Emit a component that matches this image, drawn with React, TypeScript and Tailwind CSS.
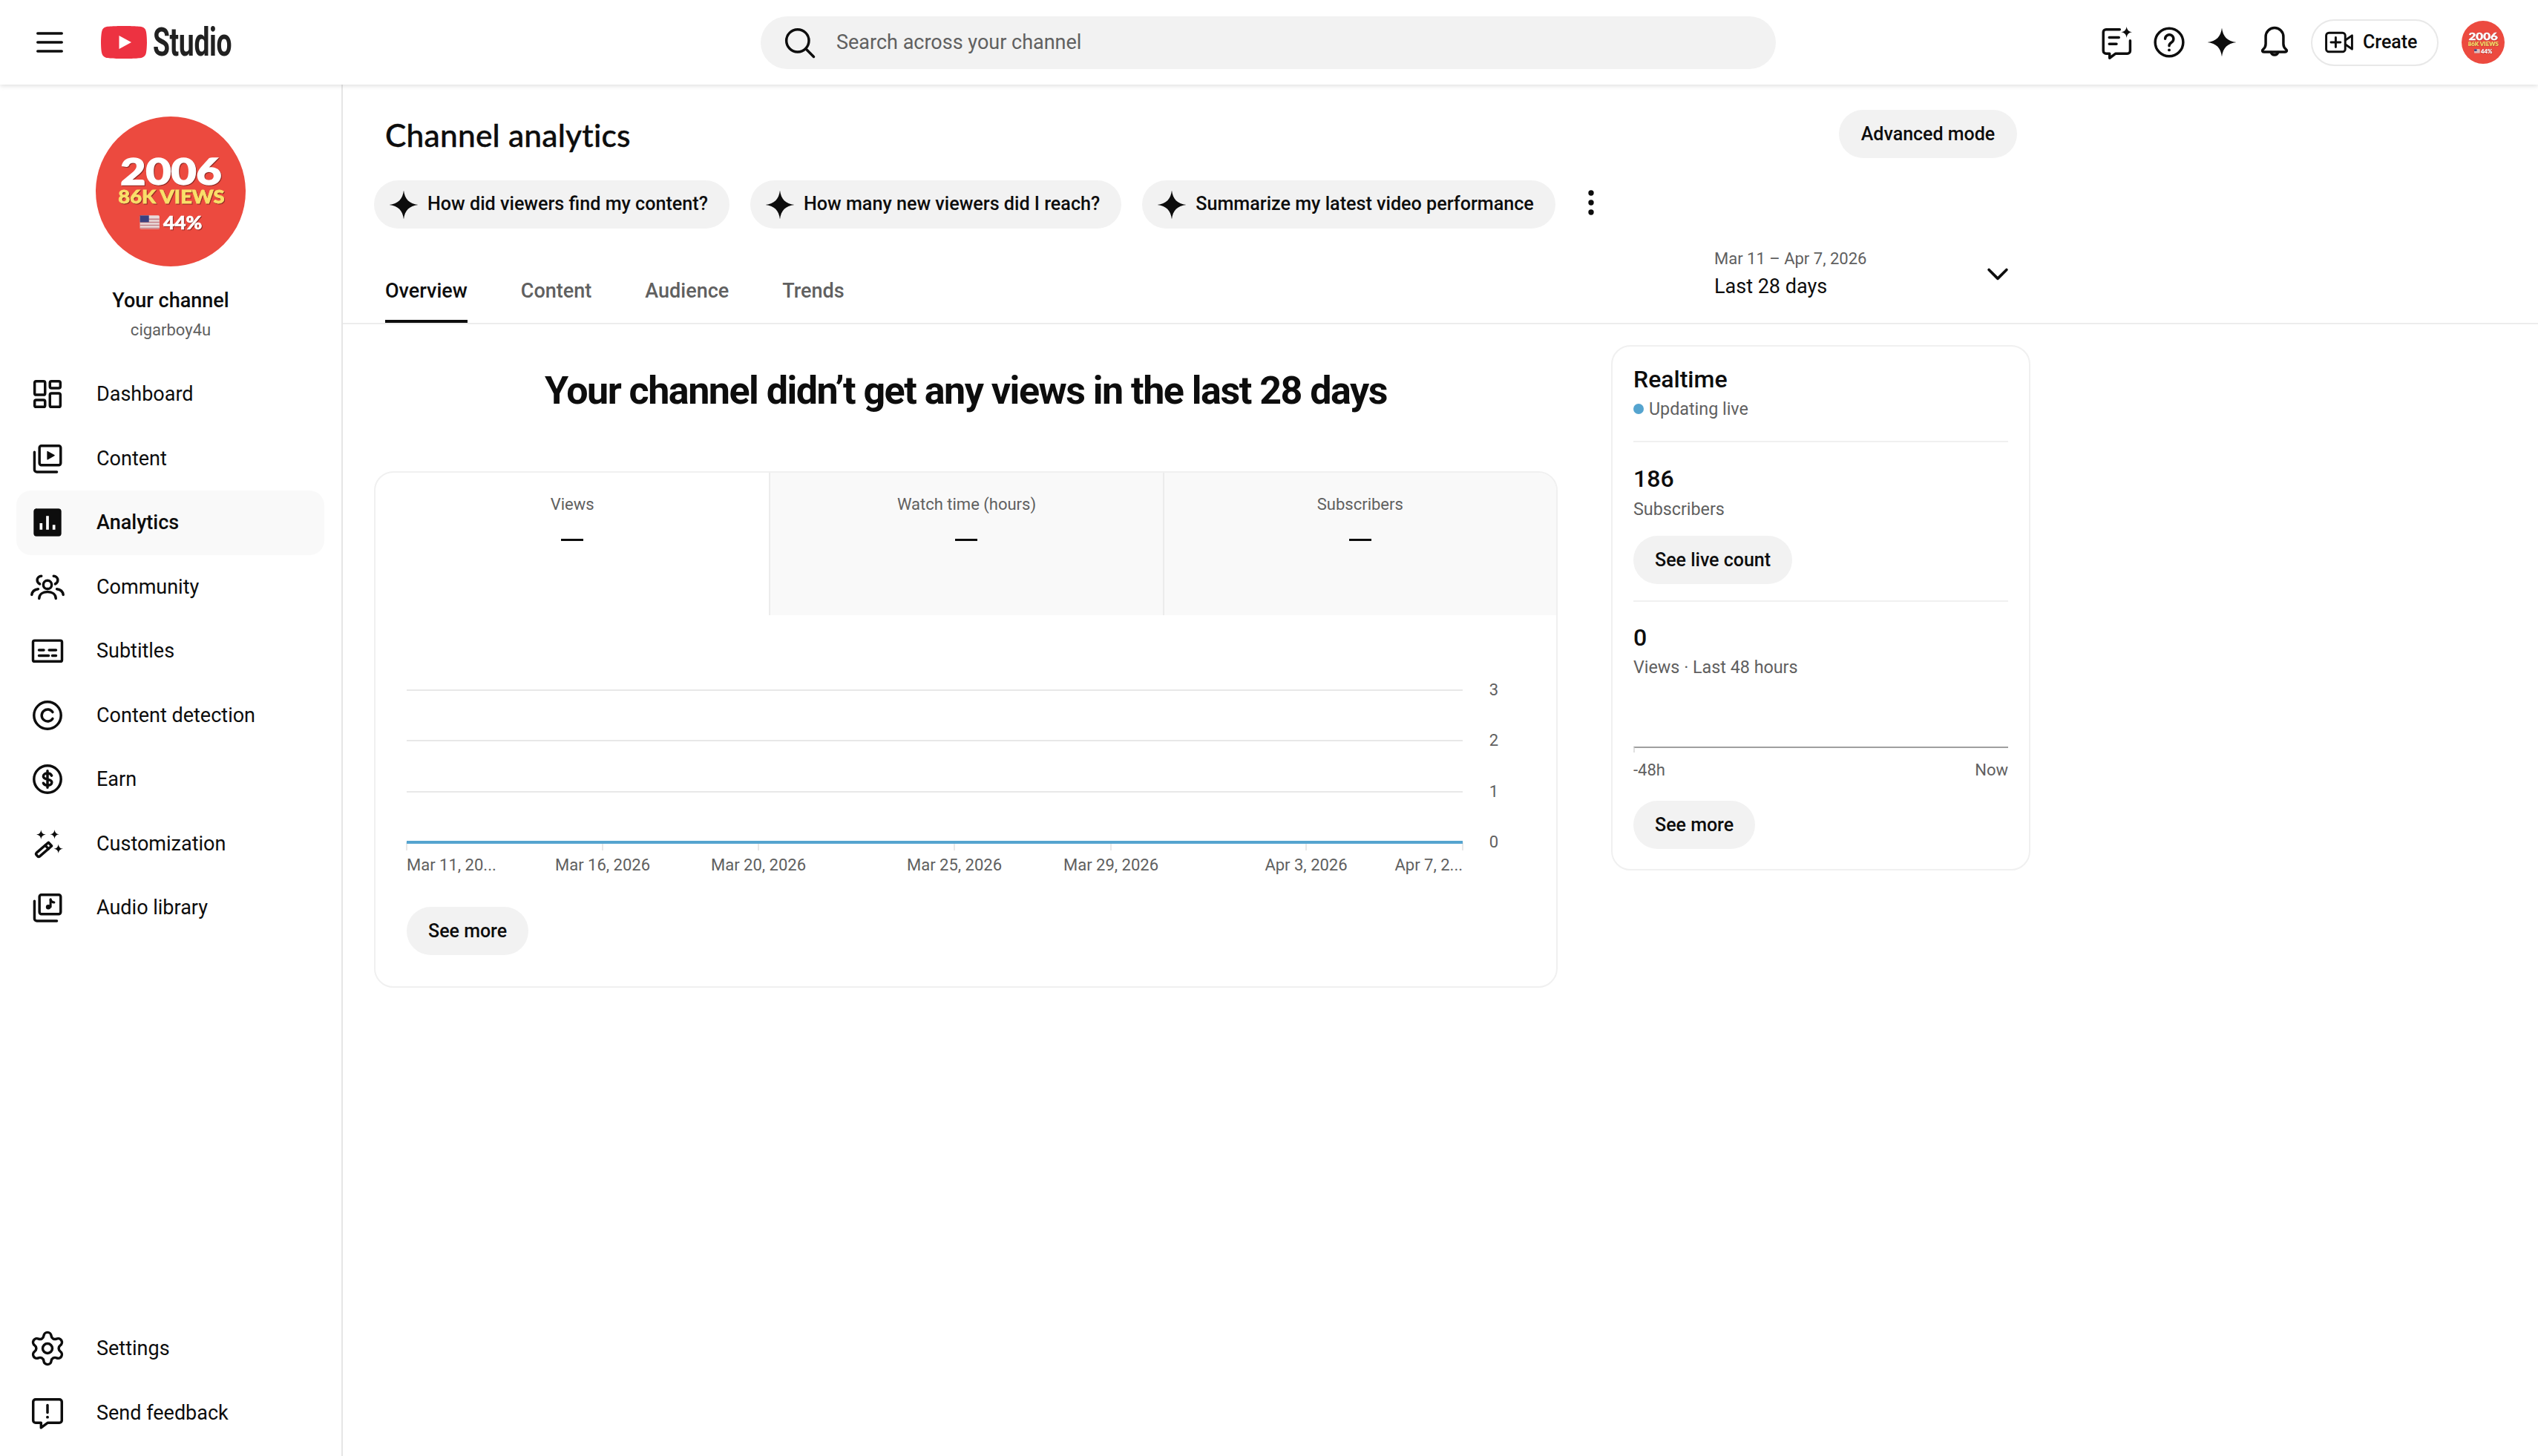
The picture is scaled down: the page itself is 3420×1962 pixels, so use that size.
import React from 'react';
import { Settings } from 'lucide-react';

type IconProps = { className?: string };

const Ico = ({ children, className = 'w-[52px] h-[52px]' }: { children: React.ReactNode; className?: string }) => (
  <svg
    viewBox="0 0 24 24"
    fill="none"
    stroke="#0d0d0d"
    strokeWidth={1.6}
    strokeLinecap="round"
    strokeLinejoin="round"
    className={`shrink-0 ${className}`}
  >
    {children}
  </svg>
);

const DashboardIcon = () => (
  <Ico>
    <rect x="4" y="4" width="6.5" height="8.5" rx="1" />
    <rect x="4" y="15.7" width="6.5" height="4.3" rx="1" />
    <rect x="13.5" y="4" width="6.5" height="4.3" rx="1" />
    <rect x="13.5" y="11.5" width="6.5" height="8.5" rx="1" />
  </Ico>
);

const ContentIcon = () => (
  <Ico>
    <rect x="7" y="4" width="13.2" height="12" rx="1.2" />
    <path d="M12 7.6 16.2 10 12 12.4Z" fill="#0d0d0d" strokeWidth={0.6} />
    <path d="M3.9 8v10.8a1.5 1.5 0 0 0 1.5 1.5h12.4" />
  </Ico>
);

const AnalyticsIcon = () => (
  <Ico>
    <rect x="3.6" y="3.6" width="16.8" height="16.8" rx="1.3" fill="#0d0d0d" strokeWidth={0.4} />
    <path d="M8 12.5V16.5M12 8V16.5M16 13.5V16.5" stroke="#fff" strokeWidth={1.7} strokeLinecap="butt" />
  </Ico>
);

const CommunityIcon = () => (
  <Ico>
    <circle cx="12" cy="10.6" r="2.6" />
    <path d="M6.8 19.2c0-2.8 2.4-4.2 5.2-4.2s5.2 1.4 5.2 4.2" />
    <path d="M8.2 5.2a2.6 2.6 0 0 0-2.6 2.4c0 1.2.8 2.1 1.6 2.5" />
    <path d="M15.8 5.2a2.6 2.6 0 0 1 2.6 2.4c0 1.2-.8 2.1-1.6 2.5" />
    <path d="M2.2 16.8c.3-2 1.8-3.2 4-3.5M21.8 16.8c-.3-2-1.8-3.2-4-3.5" />
  </Ico>
);

const SubtitlesIcon = () => (
  <Ico>
    <rect x="3" y="5.6" width="18" height="13" rx="1" />
    <path d="M6.7 11.5h3M13 11.5h4.3M6.7 15h6M15 15h2.3" />
  </Ico>
);

const CopyrightIcon = () => (
  <Ico>
    <circle cx="12" cy="12" r="8.4" />
    <path d="M15.2 10a3.7 3.7 0 1 0 0 4" />
  </Ico>
);

const EarnIcon = () => (
  <Ico>
    <circle cx="12" cy="12" r="8.4" />
    <path d="M14.6 9.8c-.4-1-1.4-1.5-2.6-1.5-1.5 0-2.6.8-2.6 1.9 0 2.7 5.3 1.2 5.3 3.8 0 1.1-1.2 1.9-2.7 1.9-1.2 0-2.2-.5-2.6-1.5M12 6.8v10.4" />
  </Ico>
);

const WandIcon = () => (
  <Ico>
    <path d="M5.2 17.6 12.6 11.2l2 2.2-7.4 6.4a1 1 0 0 1-1.4-.1l-.7-.8a1 1 0 0 1 .1-1.3Z" />
    <path d="m10.600 13 2 2.200" />
    <path
      d="M8 3.4c.2 1.8 1.100 2.700 2.900 2.900C9.100 6.500 8.200 7.400 8 9.200 7.800 7.400 6.900 6.500 5.100 6.300 6.900 6.100 7.800 5.200 8 3.400ZM16.400 3.200c.2 1.800 1.100 2.700 2.900 2.900-1.800.2-2.700 1.100-2.900 2.900-.2-1.800-1.100-2.700-2.900-2.900 1.800-.2 2.700-1.100 2.900-2.900ZM18.800 12.200c.2 1.800 1.100 2.700 2.900 2.900-1.800.2-2.700 1.100-2.900 2.900-.2-1.800-1.100-2.700-2.900-2.900 1.800-.2 2.700-1.100 2.900-2.900Z"
      fill="#0d0d0d"
      stroke="none"
    />
  </Ico>
);

const AudioIcon = () => (
  <Ico>
    <rect x="7" y="4" width="13.2" height="12" rx="1.2" />
    <path d="M13.9 6.8v4.7" strokeWidth={1.4} />
    <path d="M13.9 7.2c.4 1 1.2 1.5 2.2 1.6" strokeWidth={1.4} />
    <circle cx="12.5" cy="11.6" r="1.5" fill="#0d0d0d" stroke="none" />
    <path d="M3.9 8v10.8a1.5 1.5 0 0 0 1.5 1.5h12.4" />
  </Ico>
);

const FeedbackIcon = () => (
  <Ico>
    <path d="M4.6 3.6h14.8A1.5 1.5 0 0 1 20.9 5.100v11.500a1.500 1.500 0 0 1-1.500 1.500h-7.200L8 21.200v-3.100H4.600a1.500 1.500 0 0 1-1.500-1.500V5.100a1.500 1.500 0 0 1 1.500-1.500Z" />
    <path d="M12 7.200v4.600" />
    <circle cx="12" cy="14.600" r="0.9" fill="#0d0d0d" stroke="none" />
  </Ico>
);

const Spark = ({ className = 'w-[52px] h-[52px]' }: IconProps) => (
  <svg viewBox="0 0 24 24" className={`shrink-0 ${className}`} fill="#0d0d0d">
    <path d="M12 3c.7 5.600 3.400 8.300 9 9-5.600.7-8.300 3.400-9 9-.7-5.600-3.400-8.300-9-9 5.600-.7 8.300-3.400 9-9Z" />
  </svg>
);

const Avatar = ({ className }: IconProps) => (
  <svg viewBox="0 0 200 200" className={`shrink-0 ${className}`}>
    <circle cx="100" cy="100" r="100" fill="#ec4a3f" />
    <g
      fontFamily="Lato, Roboto, sans-serif"
      fontWeight={900}
      className="[filter:drop-shadow(1px_1.5px_0_#8f2a25)]"
    >
      <text x="33" y="91" fontSize="48" fill="#fff" stroke="#fff" strokeWidth="1.5" textLength="135" lengthAdjust="spacingAndGlyphs">2006</text>
      <text x="30" y="116" fontSize="25" fill="#f9df6a" stroke="#f9df6a" strokeWidth="0.8" textLength="142" lengthAdjust="spacingAndGlyphs">86K VIEWS</text>
      <text x="90" y="150" fontSize="25" fill="#fff" stroke="#fff" strokeWidth="0.6" textLength="52" lengthAdjust="spacingAndGlyphs">44%</text>
    </g>
    <rect x="59" y="132" width="26" height="18" rx="1.500" fill="#e9dada" />
    <path d="M59 137h26M59 141h26M59 145h26M59 149h26" stroke="#c47f85" strokeWidth="1.500" />
    <rect x="59" y="132" width="12" height="9" fill="#39407f" />
  </svg>
);

const mainNav = [
  { label: 'Dashboard', icon: <DashboardIcon /> },
  { label: 'Content', icon: <ContentIcon /> },
  { label: 'Analytics', icon: <AnalyticsIcon />, active: true },
  { label: 'Community', icon: <CommunityIcon /> },
  { label: 'Subtitles', icon: <SubtitlesIcon /> },
  { label: 'Content detection', icon: <CopyrightIcon /> },
  { label: 'Earn', icon: <EarnIcon /> },
  { label: 'Customization', icon: <WandIcon /> },
  { label: 'Audio library', icon: <AudioIcon /> },
];

const NavRow = ({ label, icon, active }: { label: string; icon: React.ReactNode; active?: boolean }) => (
  <a
    className={`flex h-[86.5px] items-center gap-[40px] rounded-[20px] pl-[16px] text-[27px] text-[#0d0d0d] ${
      active ? 'bg-[#f9f9f9] font-medium' : ''
    }`}
  >
    {icon}
    <span>{label}</span>
  </a>
);

const Pill = ({ children, className = '' }: { children: React.ReactNode; className?: string }) => (
  <button className={`flex h-[65px] items-center whitespace-nowrap rounded-full bg-[#f2f2f2] px-[29px] text-[25px] font-medium text-[#0d0d0d] ${className}`}>
    {children}
  </button>
);

const Header = () => (
  <header className="relative z-10 flex h-[114px] shrink-0 items-center bg-white shadow-[0_2px_6px_rgba(0,0,0,0.12)]">
    <div className="flex w-[1025px] shrink-0 items-center pl-[41px]">
      <svg viewBox="0 0 24 24" className="h-[52px] w-[52px]" stroke="#0d0d0d" strokeWidth={1.6} strokeLinecap="round">
        <path d="M4.500 6.500h15M4.500 12h15M4.500 17.500h15" />
      </svg>
      <svg viewBox="0 0 62 44" className="ml-[43px] h-[44px] w-[62px]">
        <path d="M60.700 6.900A7.800 7.800 0 0 0 55.200 1.300C50.400 0 31 0 31 0S11.600 0 6.800 1.300A7.800 7.800 0 0 0 1.300 6.900C0 11.700 0 22 0 22s0 10.300 1.300 15.100a7.800 7.800 0 0 0 5.500 5.600C11.600 44 31 44 31 44s19.400 0 24.200-1.300a7.800 7.800 0 0 0 5.500-5.600C62 32.300 62 22 62 22s0-10.300-1.300-15.100Z" fill="#ed3241" />
        <path d="M24.500 13 41 22l-16.500 9Z" fill="#fff" />
      </svg>
      <span className="ml-[8px] inline-block origin-left scale-x-[0.69] font-['Roboto',sans-serif] text-[54px] font-bold leading-none tracking-[-0.5px] text-[#212121]">
        Studio
      </span>
    </div>
    <div className="flex h-[71px] w-[1368px] shrink-0 items-center rounded-full bg-[#f2f2f2] pl-[26px]">
      <svg viewBox="0 0 24 24" className="h-[52px] w-[52px]" fill="none" stroke="#0d0d0d" strokeWidth={1.6} strokeLinecap="round">
        <circle cx="11" cy="11" r="7" />
        <path d="m16.200 16.200 4.800 4.800" />
      </svg>
      <span className="ml-[24px] text-[27px] text-[#606060]">Search across your channel</span>
    </div>
    <div className="flex flex-1 items-center justify-end pr-[45px]">
      <div className="flex w-[71px] justify-center">
        <Ico>
          <path d="M14 4H5.500A1.700 1.700 0 0 0 3.800 5.700v11.600a1.700 1.700 0 0 0 1.700 1.700h2.200v2.800l3.800-2.800h7.300a1.700 1.700 0 0 0 1.700-1.700V11" />
          <path d="M7.500 9h6M7.500 13h4.500" />
          <path d="M18.300 2.200c.3 2.200 1.300 3.200 3.500 3.500-2.200.3-3.200 1.300-3.500 3.500-.3-2.200-1.300-3.200-3.500-3.500 2.200-.3 3.200-1.300 3.500-3.500Z" fill="#0d0d0d" stroke="none" />
        </Ico>
      </div>
      <div className="flex w-[71px] justify-center">
        <Ico>
          <circle cx="12" cy="12" r="8.700" />
          <path d="M9.500 9.800a2.600 2.600 0 1 1 3.900 2.300c-.9.600-1.400 1-1.400 2.100" />
          <circle cx="12" cy="16.800" r="0.900" fill="#0d0d0d" stroke="none" />
        </Ico>
      </div>
      <div className="flex w-[71px] justify-center">
        <Spark />
      </div>
      <div className="flex w-[71px] justify-center">
        <Ico>
          <path d="M12 3a5.500 5.500 0 0 0-5.500 5.500V13c0 1.400-.6 2.500-1.700 3.500-.7.700-.3 1.500.6 1.500h13.200c.9 0 1.300-.8.600-1.500-1.100-1-1.700-2.100-1.700-3.500V8.500A5.500 5.500 0 0 0 12 3Z" />
          <path d="M9.800 18.200a2.300 2.300 0 0 0 4.400 0" />
        </Ico>
      </div>
      <button className="ml-[14px] flex h-[63px] w-[172px] items-center rounded-full border-2 border-[#e8e8e8] pl-[14px] text-[25px] font-medium text-[#0d0d0d]">
        <Ico className="h-[44px] w-[44px]">
          <rect x="2.500" y="5" width="14" height="14" rx="2" />
          <path d="M9.500 8.500v7M6 12h7" />
          <path d="m16.500 10.500 5-3.500v10l-5-3.500" />
        </Ico>
        <span className="ml-[10px]">Create</span>
      </button>
      <Avatar className="ml-[31px] h-[58px] w-[58px]" />
    </div>
  </header>
);

const Sidebar = () => (
  <aside className="flex w-[462px] shrink-0 flex-col justify-between border-r-2 border-[#e5e5e5] pb-[15px]">
    <div>
      <div className="flex flex-col items-center pt-[43px]">
        <Avatar className="h-[202px] w-[202px]" />
        <div className="mt-[28px] text-[27px] font-medium leading-[36px] text-[#0d0d0d]">Your channel</div>
        <div className="mt-[6px] text-[22px] leading-[32px] text-[#606060]">cigarboy4u</div>
      </div>
      <nav className="mt-[27px] flex flex-col pl-[22px] pr-[23px]">
        {mainNav.map((item) => (
          <NavRow key={item.label} {...item} />
        ))}
      </nav>
    </div>
    <div className="flex flex-col pl-[22px] pr-[23px]">
      <NavRow label="Settings" icon={<Ico><Settings x={0} y={0} width={24} height={24} strokeWidth={1.6} /></Ico>} />
      <NavRow label="Send feedback" icon={<FeedbackIcon />} />
    </div>
  </aside>
);

const chips = ['How did viewers find my content?', 'How many new viewers did I reach?', 'Summarize my latest video performance'];
const tabs = ['Overview', 'Content', 'Audience', 'Trends'];
const metrics = ['Views', 'Watch time (hours)', 'Subscribers'];

const xLabels: { text: string; x: number; anchor: 'start' | 'middle' | 'end' }[] = [
  { text: 'Mar 11, 20...', x: 42, anchor: 'start' },
  { text: 'Mar 16, 2026', x: 306, anchor: 'middle' },
  { text: 'Mar 20, 2026', x: 516, anchor: 'middle' },
  { text: 'Mar 25, 2026', x: 780, anchor: 'middle' },
  { text: 'Mar 29, 2026', x: 991, anchor: 'middle' },
  { text: 'Apr 3, 2026', x: 1254, anchor: 'middle' },
  { text: 'Apr 7, 2...', x: 1465, anchor: 'end' },
];

const Chart = () => (
  <svg viewBox="0 0 1593 370" className="block h-[370px] w-[1593px]" fontFamily="Roboto, sans-serif" fontSize="22" fill="#606060">
    {[101, 169, 238].map((y) => (
      <line key={y} x1="42" x2="1465" y1={y} y2={y} stroke="#e8e8e8" strokeWidth="2" />
    ))}
    {[42, 306, 516, 780, 991, 1254, 1465].map((x) => (
      <line key={x} x1={x} x2={x} y1="306" y2="317" stroke="#e0e0e0" strokeWidth="1.500" />
    ))}
    <line x1="42" x2="1465" y1="306" y2="306" stroke="#55a4cf" strokeWidth="4" />
    {['3', '2', '1', '0'].map((t, i) => (
      <text key={t} x="1507" y={[108, 176, 245, 313][i]} textAnchor="middle">{t}</text>
    ))}
    {xLabels.map((l) => (
      <text key={l.text} x={l.x} y="344" textAnchor={l.anchor}>{l.text}</text>
    ))}
  </svg>
);

const Realtime = () => (
  <section className="ml-[72px] h-[708px] w-[565px] shrink-0 rounded-[26px] border-2 border-[#f0f0f0] px-[28px] pt-[22px]">
    <h2 className="text-[32px] font-medium leading-[44px] text-[#0d0d0d]">Realtime</h2>
    <div className="flex h-[36px] items-center text-[23.3px] text-[#606060]">
      <span className="mr-[7px] h-[14px] w-[14px] rounded-full bg-[#55a4cf]" />
      Updating live
    </div>
    <div className="mt-[25px] border-t-2 border-[#f0f0f0] pt-[27px]">
      <div className="text-[32px] font-medium leading-[44px] text-[#0d0d0d]">186</div>
      <div className="mt-[1px] text-[23.3px] leading-[36px] text-[#606060]">Subscribers</div>
      <Pill className="mt-[18px]">See live count</Pill>
    </div>
    <div className="mt-[22px] border-t-2 border-[#f0f0f0] pt-[26px]">
      <div className="text-[32px] font-medium leading-[44px] text-[#0d0d0d]">0</div>
      <div className="text-[23.3px] leading-[36px] text-[#606060]">Views · Last 48 hours</div>
      <div className="mt-[89px] h-[8px] border-l-2 border-t-2 border-[#a0a0a0] border-l-[#e0e0e0]" />
      <div className="mt-[8px] flex justify-between text-[22px] leading-[32px] text-[#606060]">
        <span>-48h</span>
        <span>Now</span>
      </div>
      <Pill className="mt-[25px]">See more</Pill>
    </div>
  </section>
);

export default function App() {
  return (
    <div className="flex h-screen flex-col overflow-hidden bg-white font-['Roboto',sans-serif]">
      <Header />
      <div className="flex flex-1">
        <Sidebar />
        <main className="min-w-0 flex-1">
          <div className="w-[2256px] pl-[42px] pt-[34px]">
            <div className="flex items-center justify-between">
              <h1 className="pl-[15px] pt-[4px] font-['Lato',sans-serif] text-[42.5px] font-medium leading-none tracking-[0.2px] text-[#0d0d0d] [-webkit-text-stroke:0.4px_#0d0d0d]">Channel analytics</h1>
              <Pill className="w-[240px] justify-center !px-0">Advanced mode</Pill>
            </div>
            <div className="mt-[30px] flex items-center gap-[28px]">
              {chips.map((chip) => (
                <button key={chip} className="flex h-[65px] items-center rounded-full bg-[#f2f2f2] pl-[14px] pr-[29px] text-[25.15px] font-medium text-[#0d0d0d]">
                  <Spark className="h-[52px] w-[52px]" />
                  <span className="ml-[6px] mt-[-2px]">{chip}</span>
                </button>
              ))}
              <svg viewBox="0 0 24 24" className="ml-[-6px] mt-[-6px] h-[52px] w-[52px]" fill="#0d0d0d">
                <circle cx="12" cy="6" r="1.700" />
                <circle cx="12" cy="12" r="1.700" />
                <circle cx="12" cy="18" r="1.700" />
              </svg>
            </div>
          </div>
          <div className="flex h-[129px] justify-between border-b-2 border-[#ececec] pl-[57px]">
            <div className="flex items-end gap-[72px]">
              {tabs.map((tab, i) => (
                <div
                  key={tab}
                  className={`flex h-[68px] items-start pt-[5px] text-[27px] font-medium ${
                    i === 0 ? 'border-b-[4px] border-[#0d0d0d] text-[#0d0d0d]' : 'text-[#606060]'
                  }`}
                >
                  {tab}
                </div>
              ))}
            </div>
            <div className="mr-[706px] flex h-[122px] w-[404px] items-center justify-between">
              <div>
                <div className="text-[22px] leading-[34px] text-[#606060]">Mar 11 – Apr 7, 2026</div>
                <div className="text-[27px] leading-[40px] text-[#0d0d0d]">Last 28 days</div>
              </div>
              <svg viewBox="0 0 24 24" className="h-[44px] w-[44px]" fill="none" stroke="#0d0d0d" strokeWidth={2} strokeLinecap="round" strokeLinejoin="round">
                <path d="m5.500 9 6.500 6.500L18.500 9" />
              </svg>
            </div>
          </div>
          <div className="flex items-start pl-[42px] pt-[28px]">
            <div className="w-[1595px] shrink-0">
              <h2 className="mt-[31px] text-center text-[52px] font-bold leading-[62px] tracking-[-1.5px] text-[#0d0d0d]">
                Your channel didn’t get any views in the last 28 days
              </h2>
              <section className="mt-[77px] h-[696px] overflow-hidden rounded-[26px] border-2 border-[#f0f0f0]">
                <div className="grid h-[192px] grid-cols-3">
                  {metrics.map((m, i) => (
                    <div key={m} className={`flex flex-col items-center pt-[27px] ${i > 0 ? 'border-l-2 border-[#ececec] bg-[#f9f9f9]' : ''}`}>
                      <div className="text-[22px] leading-[32px] text-[#606060]">{m}</div>
                      <div className="mt-[30px] h-[3px] w-[30px] bg-[#0d0d0d]" />
                    </div>
                  ))}
                </div>
                <Chart />
                <div className="ml-[42px] mt-[23px]">
                  <Pill>See more</Pill>
                </div>
              </section>
            </div>
            <Realtime />
          </div>
        </main>
      </div>
    </div>
  );
}
